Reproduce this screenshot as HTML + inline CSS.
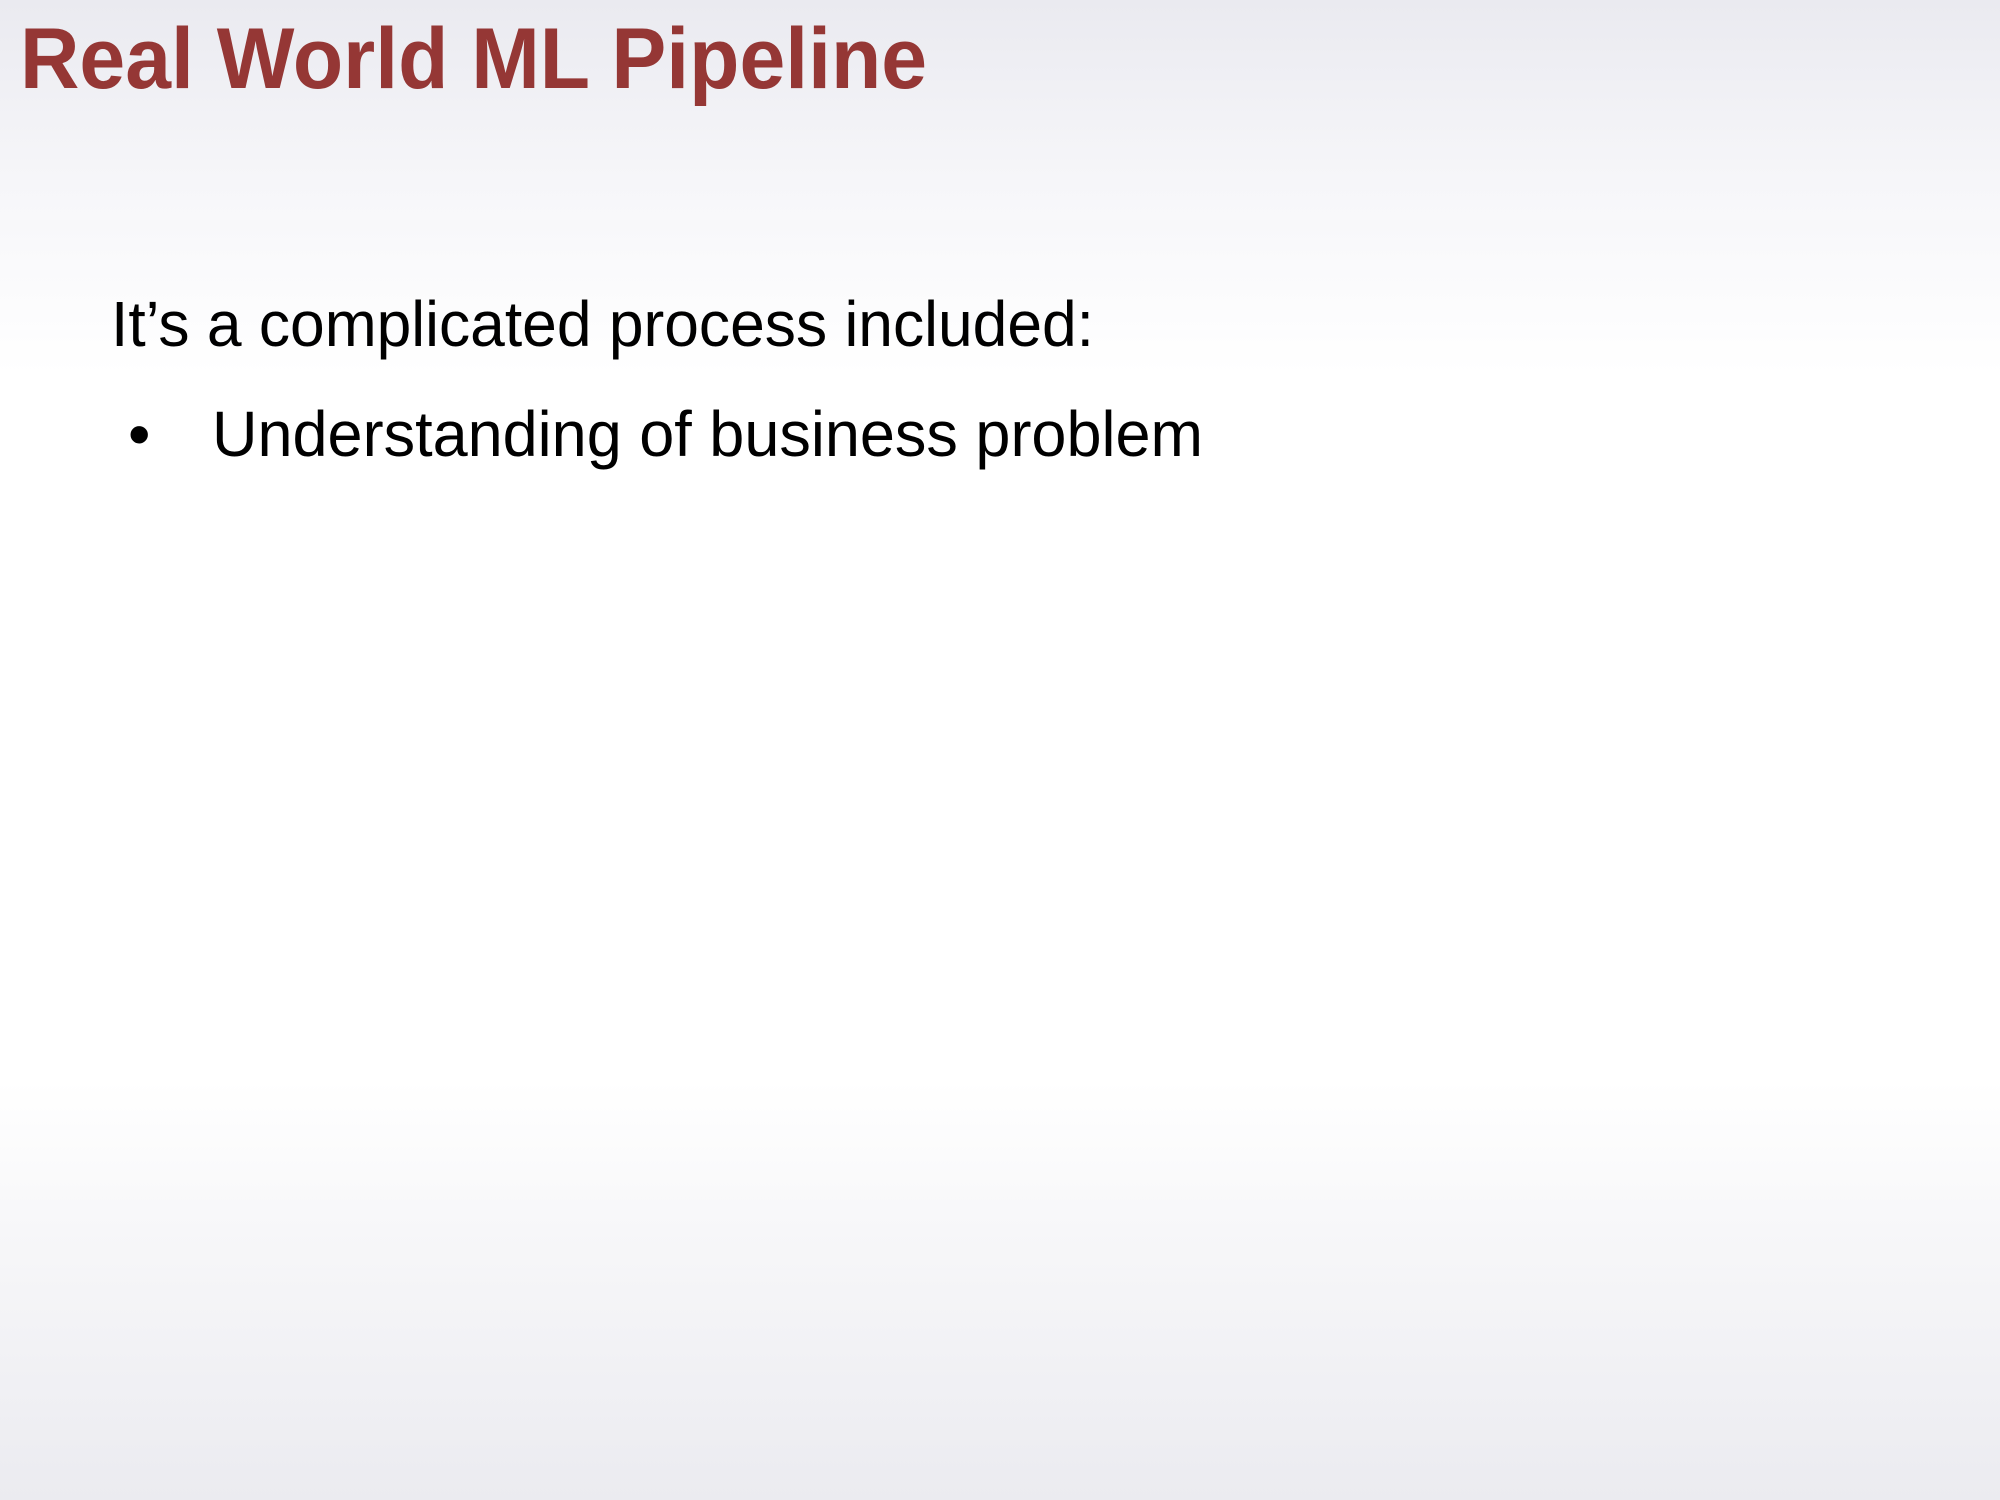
<!DOCTYPE html>
<html><head><meta charset="utf-8">
<style>
html,body{margin:0;padding:0}
body{width:2000px;height:1500px;overflow:hidden;position:relative;
background:linear-gradient(to bottom,#eaeaf0 0%,#f6f6f9 12%,#ffffff 25%,#ffffff 72%,#f7f7f9 82%,#ebebf0 100%);
font-family:"Liberation Sans",sans-serif;}
.t{position:absolute;white-space:nowrap;transform-origin:0 0;line-height:1}
#title{left:20px;top:16px;font-size:86px;font-weight:bold;color:#953735;}
#l1{left:111px;top:292px;font-size:64px;color:#000;}
#b{left:128px;top:402px;font-size:64px;color:#000;}
#l2{left:212px;top:402px;font-size:64px;color:#000;}
</style></head><body>
<div class="t" id="title" data-w="907">Real World ML Pipeline</div>
<div class="t" id="l1" data-w="983">It’s a complicated process included:</div>
<div class="t" id="b">•</div>
<div class="t" id="l2" data-w="991">Understanding of business problem</div>
<script>
document.querySelectorAll('[data-w]').forEach(function(e){
var w=e.getBoundingClientRect().width;var t=+e.getAttribute('data-w');
if(w>0)e.style.transform='scaleX('+(t/w)+')';});
</script>
</body></html>
